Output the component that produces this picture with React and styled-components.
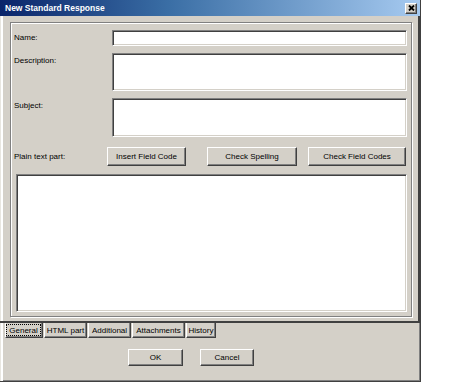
import React from 'react';
import styled, { createGlobalStyle } from 'styled-components';

const GlobalStyle = createGlobalStyle`
  body {
    margin: 0;
    background: #fff;
    font-family: "Liberation Sans", Arial, sans-serif;
  }
`;

const Window = styled.div`
  width: 421px;
  height: 382px;
  box-sizing: border-box;
  background: #d4d0c8;
  border-right: 1px solid #404040;
  border-bottom: 1px solid #404040;
  box-shadow: inset 1px 0 #e8e6e0, inset 3px 0 #fff, inset 0 -1px #808080, inset -1px 0 #808080;
  display: flex;
  flex-direction: column;
`;

const TitleBar = styled.div`
  height: 16px;
  display: flex;
  align-items: center;
  padding: 0 3px 0 5px;
  background: linear-gradient(to right, #0a246a 0%, #3a6ea5 40%, #a6caf0 100%);
  color: #fff;
  font-weight: bold;
  font-size: 8.5px;
  white-space: nowrap;
`;

const CloseButton = styled.div`
  margin-left: auto;
  width: 12px;
  height: 11px;
  box-sizing: border-box;
  background: #d4d0c8;
  border: 1px solid;
  border-color: #fff #404040 #404040 #fff;
  box-shadow: inset -1px -1px #808080;
  display: flex;
  align-items: center;
  justify-content: center;
`;

const Panel = styled.div`
  width: 420px;
  height: 307px;
  box-sizing: border-box;
  border-right: 2px solid #404040;
  border-bottom: 2px solid #404040;
  padding: 6px 0 0 10px;
`;

const Frame = styled.div`
  width: 402px;
  height: 295px;
  box-sizing: border-box;
  border: 1px solid #808080;
  box-shadow: 1px 1px 0 #fff, inset 1px 1px 0 #fff;
  padding: 7px 4px 4px 3px;
  display: flex;
  flex-direction: column;
`;

const Row = styled.div`
  display: flex;
  height: ${p => p.h}px;
  margin-bottom: ${p => p.mb}px;
`;

const Label = styled.div`
  width: ${p => p.w || 98}px;
  flex: none;
  font-size: 8px;
  line-height: 10px;
  padding-top: ${p => p.pt ?? 3}px;
  color: #000;
`;

const Field = styled.div`
  flex: 1;
  background: #fff;
  box-sizing: border-box;
  border: 1px solid;
  border-color: #808080 #fff #fff #808080;
  box-shadow: inset 1px 1px #404040, inset -1px -1px #d4d0c8;
`;

const TextArea = styled(Field)`
  flex: none;
  height: 138px;
  margin-left: 2px;
`;

const Button = styled.div`
  width: ${p => p.w}px;
  height: ${p => p.h || 19}px;
  margin-left: ${p => p.ml || 0}px;
  box-sizing: border-box;
  background: #d4d0c8;
  border: 1px solid;
  border-color: #fff #404040 #404040 #fff;
  box-shadow: inset -1px -1px #808080;
  font-size: 8px;
  color: #000;
  display: flex;
  align-items: center;
  justify-content: center;
  white-space: nowrap;
`;

const TabStrip = styled.div`
  display: flex;
  gap: 1px;
  padding-left: 5px;
  height: 15px;
`;

const Tab = styled.div`
  width: ${p => p.w}px;
  height: 15px;
  box-sizing: border-box;
  border-left: 1px solid #fff;
  border-right: 1px solid #404040;
  border-bottom: 1px solid #404040;
  box-shadow: inset -1px -1px #808080;
  font-size: 8px;
  color: #000;
  display: flex;
  align-items: center;
  justify-content: center;
  padding: ${p => (p.active ? '1px 1px 1px 0' : '0')};
`;

const Focus = styled.span`
  flex: 1;
  align-self: stretch;
  display: flex;
  align-items: center;
  justify-content: center;
  border: 1px dotted #000;
`;

const Footer = styled.div`
  display: flex;
  padding: 11px 0 0 128px;
`;

const tabs = [
  { name: 'General', w: 38, active: true },
  { name: 'HTML part', w: 43 },
  { name: 'Additional', w: 43 },
  { name: 'Attachments', w: 53 },
  { name: 'History', w: 30 },
];

const App = () => (
  <>
    <GlobalStyle />
    <Window>
      <TitleBar>
        New Standard Response
        <CloseButton>
          <svg width="7" height="6" viewBox="0 0 7 6">
            <path d="M1 0.5 L6 5.5 M6 0.5 L1 5.5" stroke="#000" strokeWidth="1.8" />
          </svg>
        </CloseButton>
      </TitleBar>
      <Panel>
        <Frame>
          <Row h={16} mb={7}>
            <Label>Name:</Label>
            <Field />
          </Row>
          <Row h={38} mb={7}>
            <Label>Description:</Label>
            <Field />
          </Row>
          <Row h={39} mb={10}>
            <Label>Subject:</Label>
            <Field />
          </Row>
          <Row h={19} mb={8}>
            <Label w={93} pt={5}>Plain text part:</Label>
            <Button w={79}>Insert Field Code</Button>
            <Button w={90} ml={21}>Check Spelling</Button>
            <Button w={98} ml={11}>Check Field Codes</Button>
          </Row>
          <TextArea />
        </Frame>
      </Panel>
      <TabStrip>
        {tabs.map(t => (
          <Tab key={t.name} w={t.w} active={t.active}>
            {t.active ? <Focus>{t.name}</Focus> : t.name}
          </Tab>
        ))}
      </TabStrip>
      <Footer>
        <Button w={55} h={17}>OK</Button>
        <Button w={54} h={17} ml={17}>Cancel</Button>
      </Footer>
    </Window>
  </>
);

export default App;
